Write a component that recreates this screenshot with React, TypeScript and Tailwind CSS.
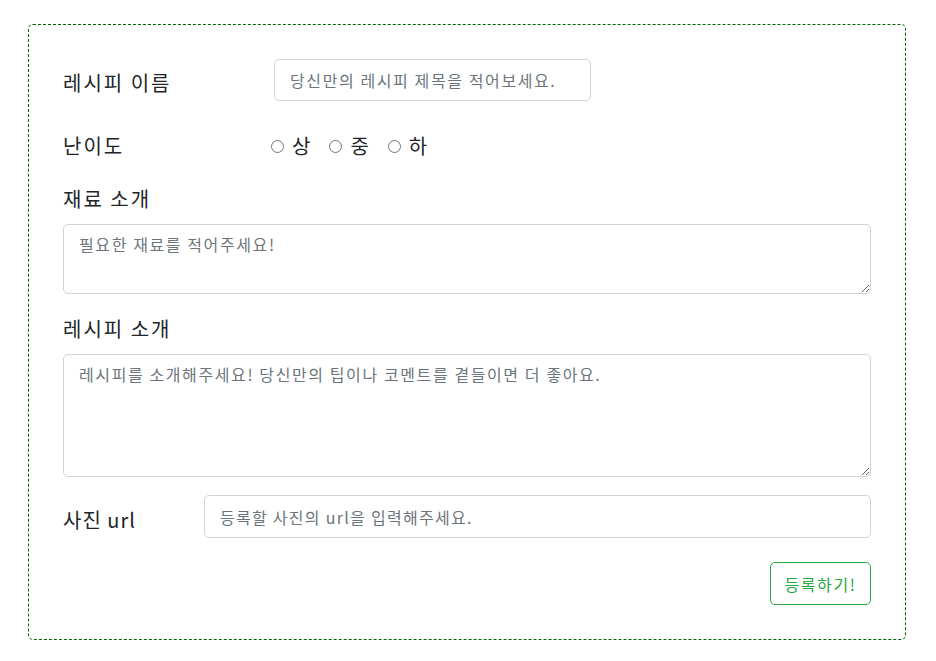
import React from "react";

export default function App() {
  const font = { fontFamily: '"Noto Sans CJK KR", "Noto Sans", sans-serif' };
  return (
    <div className="bg-white min-h-[661px] pt-6" style={font}>
      <div className="ml-[28px] w-[878px] border border-dashed border-[#006400] rounded-[5px] px-[34px] pt-[34px] pb-[34px] text-[#212529]">
        <div className="flex items-center">
          <label className="w-[211px] text-[20px] leading-[30px] pt-[6px] tracking-[0.1em]">레시피 이름</label>
          <input
            type="text"
            placeholder="당신만의 레시피 제목을 적어보세요."
            className="w-[317px] h-[42px] border border-[#ced4da] rounded-[5px] px-[15px] text-[16px] tracking-[0.1em] placeholder:text-[#6c757d] outline-none"
          />
        </div>
        <div className="flex items-center mt-[30px] h-[30px]">
          <label className="w-[208px] text-[20px] leading-[30px] tracking-[0.1em]">난이도</label>
          <div className="flex items-center text-[20px] leading-[30px]">
            {["상", "중", "하"].map((t) => (
              <label key={t} className="flex items-center mr-[19px]">
                <input
                  type="radio"
                  name="level"
                  className="appearance-none w-[13px] h-[13px] rounded-full border border-[#767676] mr-[8px] mt-[1px]"
                />
                <span>{t}</span>
              </label>
            ))}
          </div>
        </div>
        <div className="mt-[23px]">
          <label className="block text-[20px] leading-[30px] tracking-[0.1em]">재료 소개</label>
          <textarea
            placeholder="필요한 재료를 적어주세요!"
            className="block mt-[10px] w-full h-[70px] border border-[#ced4da] rounded-[5px] px-[15px] py-[7px] text-[16px] leading-[24px] tracking-[0.1em] placeholder:text-[#6c757d] outline-none"
          />
        </div>
        <div className="mt-[20px]">
          <label className="block text-[20px] leading-[30px] tracking-[0.1em]">레시피 소개</label>
          <textarea
            placeholder="레시피를 소개해주세요! 당신만의 팁이나 코멘트를 곁들이면 더 좋아요."
            className="block mt-[10px] w-full h-[123px] border border-[#ced4da] rounded-[5px] px-[15px] py-[7px] text-[16px] leading-[24px] tracking-[0.1em] placeholder:text-[#6c757d] outline-none"
          />
        </div>
        <div className="flex items-center mt-[18px]">
          <label className="w-[141px] shrink-0 text-[20px] leading-[30px] pt-[6px] tracking-[0.05em]">사진 url</label>
          <input
            type="text"
            placeholder="등록할 사진의 url을 입력해주세요."
            className="flex-1 h-[43px] border border-[#ced4da] rounded-[5px] px-[15px] text-[16px] tracking-[0.08em] placeholder:text-[#6c757d] outline-none"
          />
        </div>
        <div className="flex justify-end mt-[24px]">
          <button className="w-[101px] h-[43px] border border-[#28a745] text-[#28a745] rounded-[5px] text-[16px] tracking-[0.1em] bg-white">
            등록하기!
          </button>
        </div>
      </div>
    </div>
  );
}
